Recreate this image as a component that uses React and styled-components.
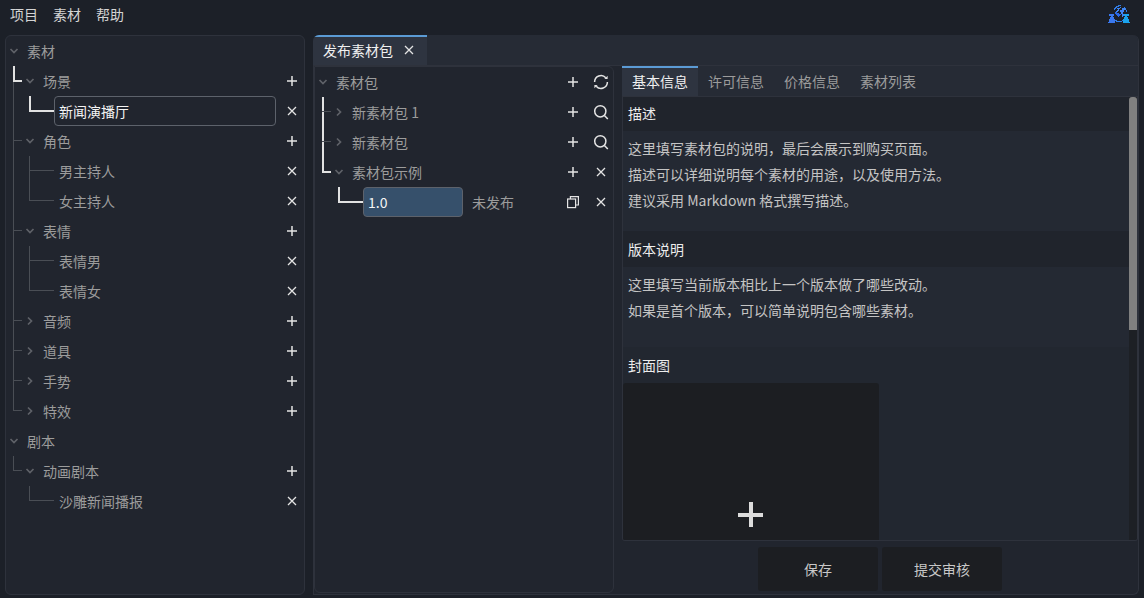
import React from "react";
import styled, { createGlobalStyle, css } from "styled-components";

const Global = createGlobalStyle`
  html, body { margin: 0; padding: 0; height: 100%; background: #1c2028; overflow: hidden; }
  #root { height: 100%; }
  * { box-sizing: border-box; }
`;

const DIM = "#4a4e55";
const BRIGHT = "#e2e2e2";

const Page = styled.div`
  width: 1144px; height: 598px; display: flex; flex-direction: column;
  background: #1c2028; color: #9c9c9c;
  font: 14px/20px "Noto Sans CJK SC", "Noto Sans", sans-serif;
`;
const MenuBar = styled.header`
  height: 35px; flex: none; display: flex; align-items: flex-start; padding: 4px 14px 0 10px; gap: 15px;
`;
const MenuItem = styled.span` color: #d4d4d4; line-height: 20px; `;
const Logo = styled.svg` margin: 1px 0 0 auto; width: 22px; height: 19px; shape-rendering: crispEdges; `;
const Body = styled.main`
  flex: 1; min-height: 0; display: flex; gap: 8px; padding: 0 5px 3px 5px;
`;
const Panel = styled.section`
  background: #21252e; border: 1px solid #2e323c; border-radius: 6px;
`;
const SidePanel = styled(Panel)` width: 300px; flex: none; `;
const Workspace = styled.section`
  flex: 1; min-width: 0; display: flex; flex-direction: column; overflow: hidden;
  background: #21252e; border-right: 1px solid #2e323c; border-bottom: 1px solid #2e323c;
  border-radius: 6px 6px 6px 0;
`;
const TabStrip = styled.nav`
  display: flex; flex: none; background: #262b35; border-bottom: 1px solid #2e323c;
  height: 31px;
`;
const Tab = styled.div`
  display: flex; align-items: center; padding: 0 10px 2px; gap: 8px; white-space: nowrap;
  width: ${p => p.$w}px; flex: none;
  color: ${p => (p.$active ? "#f0f0f0" : "#9c9c9c")};
  background: ${p => (p.$active ? "#2e3440" : "transparent")};
  border-top: 2px solid ${p => (p.$active ? "#5b9bd5" : "transparent")};
`;
const WorkBody = styled.div`
  flex: 1; min-height: 0; display: flex; gap: 8px; border-left: 1px solid #2e323c;
`;
const MiddlePanel = styled(Panel)`
  width: 300px; flex: none; margin-bottom: 1px;
  border-radius: 0 6px 6px 6px;
`;
const Detail = styled.div`
  flex: 1; min-width: 0; min-height: 0; display: flex; flex-direction: column;
`;
const DetailFrame = styled.div`
  height: 444px; flex: none; display: flex; flex-direction: column;
  border: 1px solid #2e323c; border-top: 0; border-radius: 0 0 3px 3px; overflow: hidden;
`;
const DetailScroll = styled.div`
  flex: 1; min-height: 0; display: flex; overflow: hidden;
`;
const DetailContent = styled.div` flex: 1; min-width: 0; `;
const ScrollTrack = styled.div`
  width: 8px; flex: none; background: #1d2025;
`;
const ScrollThumb = styled.div`
  height: 233px; width: 8px; background: #808080; border-radius: 3px 3px 0 0;
`;
const SectionTitle = styled.h3`
  margin: 0; font-size: 14px; font-weight: 400; line-height: 20px; color: #ededed;
  padding: ${p => (p.$first ? "6px" : "8px")} 5px 8px;
  background: #20242c;
`;
const Notes = styled.div`
  background: #242933; color: #c4c4c4; padding: 4px 5px 0; height: ${p => p.$h}px;
  line-height: 26px;
`;
const Cover = styled.div`
  width: 256px; height: 256px; background: #1c1e22; border-radius: 3px;
  display: flex; align-items: center; justify-content: center;
  color: #dcdcdc;
`;
const CoverPlus = styled.svg` width: 25px; height: 25px; margin: 6px 2px 0 0; shape-rendering: crispEdges; `;
const SectionTitlePlain = styled(SectionTitle)` background: #222730; `;
const CoverArea = styled.div` background: #222730; `;
const Footer = styled.footer`
  flex: 1; display: flex; justify-content: center; gap: 4px; padding-top: 6px;
`;
const Btn = styled.button`
  width: 120px; height: 44px; border: 0; border-radius: 3px; background: #1c1e22; color: #c8c8c8;
  font: inherit; padding: 0;
`;

const Row = styled.div`
  height: 30px; display: flex; align-items: stretch; padding-right: 4px;
`;
const Cell = styled.span`
  width: 16px; flex: none; position: relative; display: block;
  ${p => p.$v && css`
    &::before { content: ""; position: absolute; left: 7px; width: ${p.$vBright ? 2 : 1}px; top: 0; height: 30px; background: ${p.$vBright ? BRIGHT : DIM}; }
  `}
  ${p => p.$elbow && css`
    &::before { content: ""; position: absolute; left: 7px; top: 0; width: 1px; height: 15px; background: ${DIM}; }
  `}
  ${p => p.$h && css`
    &::after { content: ""; position: absolute; left: ${p.$stub ? 0 : 7}px; right: 0; top: 14px; height: 1px; background: ${DIM}; }
  `}
  ${p => p.$bright && css`
    &::after { content: ""; position: absolute; left: ${p.$stub ? 0 : 7}px; right: 0; top: 14px; height: 2px; background: ${BRIGHT}; }
    &::before { content: ""; position: absolute; left: 7px; width: 2px; top: 0; height: 16px; background: ${p.$stub ? "transparent" : BRIGHT}; }
  `}
`;
const TeeRest = styled.span`
  position: absolute; left: 7px; top: 16px; bottom: 0; width: 1px; background: ${DIM};
`;
const Chevron = styled.svg`
  width: 16px; flex: none; height: 30px; color: #5f6268;
`;
const Label = styled.span`
  margin-left: 5px; flex: none; line-height: 30px; color: #9c9c9c;
`;
const Spacer = styled.span` flex: 1; `;
const Act = styled.button`
  width: 16px; flex: none; margin-left: ${p => p.$gap || 0}px; background: none; border: 0; padding: 0;
  height: 30px; display: flex; align-items: center; justify-content: center; color: #e4e4e4;
`;
const NameBox = styled.div`
  flex: ${p => (p.$w ? "none" : 1)}; width: ${p => (p.$w ? `${p.$w}px` : "auto")};
  height: 30px; padding: 0 4px; line-height: 28px;
  border: 1px solid #5d626b; border-radius: 4px;
  background: ${p => (p.$fill ? "#36506b" : "#21252e")};
  color: #f4f4f4;
`;
const Status = styled.span` margin-left: 9px; line-height: 30px; color: #9c9c9c; `;

const Plus = () => (
  <svg width="12" height="12" viewBox="0 0 12 12"><path d="M6 1v10M1 6h10" stroke="currentColor" strokeWidth="1.5" fill="none" /></svg>
);
const Cross = () => (
  <svg width="12" height="12" viewBox="0 0 12 12"><path d="M2 2l8 8M10 2l-8 8" stroke="currentColor" strokeWidth="1.3" fill="none" /></svg>
);
const Refresh = () => (
  <svg width="16" height="16" viewBox="0 0 16 16" fill="none" stroke="currentColor" strokeWidth="1.5">
    <path d="M1.6 8A6.4 6.4 0 0 1 12.8 3.8M14.4 8A6.4 6.4 0 0 1 3.2 12.2" />
    <path d="M11.4 5h3.2V1.8z" fill="currentColor" stroke="none" />
    <path d="M4.6 11H1.4v3.2z" fill="currentColor" stroke="none" />
  </svg>
);
const Search = () => (
  <svg width="16" height="16" viewBox="0 0 16 16" fill="none" stroke="currentColor" strokeWidth="1.5">
    <circle cx="7.3" cy="7.3" r="5.6" /><path d="M11.4 11.4l3.4 3.6" />
  </svg>
);
const Copy = () => (
  <svg width="14" height="14" viewBox="0 0 14 14" fill="none" stroke="currentColor" strokeWidth="1.2">
    <rect x="1.6" y="4" width="8" height="8.6" /><path d="M4.4 4V1.6h8v8.4H9.6" />
  </svg>
);
const Down = () => (
  <Chevron viewBox="0 0 16 30"><path d="M4.5 13l3.5 3.5 3.5-3.5" stroke="currentColor" strokeWidth="1.7" fill="none" /></Chevron>
);
const Right = () => (
  <Chevron viewBox="0 0 16 30"><path d="M6 11.5l3.5 3.5-3.5 3.5" stroke="currentColor" strokeWidth="1.7" fill="none" /></Chevron>
);

const ICONS = { plus: Plus, x: Cross, refresh: Refresh, search: Search, copy: Copy };

function Actions({ icons }) {
  return icons.map((n, i) => {
    const I = ICONS[n];
    return <Act key={i} $gap={i ? 12 : 8}><I /></Act>;
  });
}

function Guides({ items }) {
  return items.map((g, i) => {
    if (g === "pass") return <Cell key={i} $v />;
    if (g === "blank") return <Cell key={i} />;
    if (g === "tee") return <Cell key={i} $v $h />;
    if (g === "brightPass") return <Cell key={i} $v $vBright $h />;
    if (g === "last") return <Cell key={i} $elbow $h />;
    if (g === "stub") return <Cell key={i} $h $stub />;
    if (g === "stubB") return <Cell key={i} $bright $stub />;
    if (g === "brightTee") return <Cell key={i} $bright><TeeRest /></Cell>;
    if (g === "brightLast") return <Cell key={i} $bright />;
    return null;
  });
}

const Item = ({ guides = [], open, text, actions = [] }) => (
  <Row>
    <Guides items={guides} />
    {open === undefined ? null : open ? <Down /> : <Right />}
    <Label>{text}</Label>
    <Spacer />
    <Actions icons={actions} />
  </Row>
);

export default function App() {
  return (
    <Page>
      <Global />
      <MenuBar>
        <MenuItem>项目</MenuItem>
        <MenuItem>素材</MenuItem>
        <MenuItem>帮助</MenuItem>
        <Logo viewBox="0 0 22 19" aria-hidden="true">
          <path d="M6 3h1V2h1V1h2V0h3v1h-2v1H9v1H8v1H7v1H6zM16 2h1v1h1v2h1v2h-1V5h-1V4h-1zM6 14h1v1h2v1h5v-1h2v-1h1v1h-1v1h-2v1H8v-1H6z" fill="#2f7ce8" />
          <path d="M9 3h3V2h1v1h-1v1h-1v2h-1v1H8V6h1V5h1V4H9zM14 3h3v1h1v1h-2v2h-1v2h1v2h-1v1h-1V9h-1V7h-1V5h2z" fill="#3f86f5" />
          <path d="M7 7h2v1h2v1h2v1h-1v1h-1v1h-1v-1H9v-1H8V9H7z" fill="#2a68e6" />
          <path d="M1 9h5v2H5v1h1v2h1v3H1v-3h1v-2h1v-1H1z" fill="#3a78ee" />
          <path d="M0 17h7v1H0z" fill="#3a78ee" />
          <path d="M16 9h5v2h-2v1h1v2h1v3h-6v-3h1v-2h1v-1h-1z" fill="#1aa4ee" />
          <path d="M15 17h7v1h-7z" fill="#1aa4ee" />
        </Logo>
      </MenuBar>
      <Body>
        <SidePanel>
          <Item open text="素材" />
          <Item guides={["brightTee"]} open text="场景" actions={["plus"]} />
          <Row>
            <Guides items={["pass", "brightLast", "stubB"]} />
            <NameBox>新闻演播厅</NameBox>
            <Actions icons={["x"]} />
          </Row>
          <Item guides={["tee"]} open text="角色" actions={["plus"]} />
          <Item guides={["pass", "tee", "stub"]} text="男主持人" actions={["x"]} />
          <Item guides={["pass", "last", "stub"]} text="女主持人" actions={["x"]} />
          <Item guides={["tee"]} open text="表情" actions={["plus"]} />
          <Item guides={["pass", "tee", "stub"]} text="表情男" actions={["x"]} />
          <Item guides={["pass", "last", "stub"]} text="表情女" actions={["x"]} />
          <Item guides={["tee"]} open={false} text="音频" actions={["plus"]} />
          <Item guides={["tee"]} open={false} text="道具" actions={["plus"]} />
          <Item guides={["tee"]} open={false} text="手势" actions={["plus"]} />
          <Item guides={["last"]} open={false} text="特效" actions={["plus"]} />
          <Item open text="剧本" />
          <Item guides={["last"]} open text="动画剧本" actions={["plus"]} />
          <Item guides={["blank", "last", "stub"]} text="沙雕新闻播报" actions={["x"]} />
        </SidePanel>
        <Workspace>
          <TabStrip>
            <Tab $active $w={114}>
              发布素材包
              <Act><Cross /></Act>
            </Tab>
          </TabStrip>
          <WorkBody>
            <MiddlePanel>
              <Item open text="素材包" actions={["plus", "refresh"]} />
              <Item guides={["brightPass"]} open={false} text="新素材包 1" actions={["plus", "search"]} />
              <Item guides={["brightPass"]} open={false} text="新素材包" actions={["plus", "search"]} />
              <Item guides={["brightLast"]} open text="素材包示例" actions={["plus", "x"]} />
              <Row>
                <Guides items={["blank", "brightLast", "stubB"]} />
                <NameBox $fill $w={100}>1.0</NameBox>
                <Status>未发布</Status>
                <Spacer />
                <Actions icons={["copy", "x"]} />
              </Row>
            </MiddlePanel>
            <Detail>
              <TabStrip>
                <Tab $active $w={76}>基本信息</Tab>
                <Tab $w={76}>许可信息</Tab>
                <Tab $w={76}>价格信息</Tab>
                <Tab $w={76}>素材列表</Tab>
              </TabStrip>
              <DetailFrame>
                <DetailScroll>
                  <DetailContent>
                    <SectionTitle $first>描述</SectionTitle>
                    <Notes $h={100}>
                      这里填写素材包的说明，最后会展示到购买页面。<br />
                      描述可以详细说明每个素材的用途，以及使用方法。<br />
                      建议采用 Markdown 格式撰写描述。
                    </Notes>
                    <SectionTitle>版本说明</SectionTitle>
                    <Notes $h={80}>
                      这里填写当前版本相比上一个版本做了哪些改动。<br />
                      如果是首个版本，可以简单说明包含哪些素材。
                    </Notes>
                    <SectionTitlePlain>封面图</SectionTitlePlain>
                    <CoverArea>
                      <Cover>
                        <CoverPlus viewBox="0 0 25 25">
                          <path d="M10.5 0h4v10.5H25v4H14.5V25h-4V14.5H0v-4h10.5z" fill="currentColor" />
                        </CoverPlus>
                      </Cover>
                    </CoverArea>
                  </DetailContent>
                  <ScrollTrack><ScrollThumb /></ScrollTrack>
                </DetailScroll>
              </DetailFrame>
              <Footer>
                <Btn>保存</Btn>
                <Btn>提交审核</Btn>
              </Footer>
            </Detail>
          </WorkBody>
        </Workspace>
      </Body>
    </Page>
  );
}
